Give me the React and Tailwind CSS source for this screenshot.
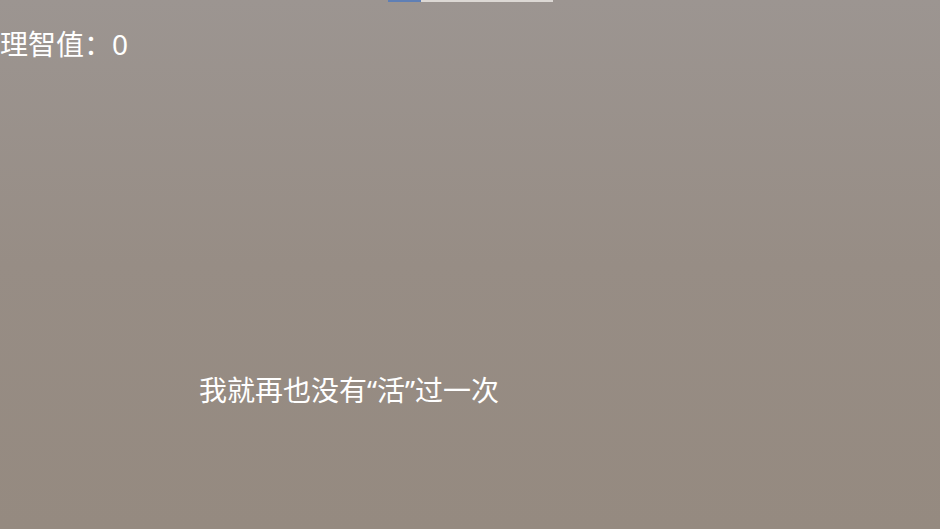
export default function App() {
  const progress = 20;
  return (
    <div
      className="relative h-[529px] w-[940px] overflow-hidden bg-gradient-to-b from-[#9c9591] via-[#978d85] to-[#958a80] text-white"
      style={{ fontFamily: '"Noto Sans", "Noto Sans CJK SC", sans-serif' }}
    >
      {/* loading bar */}
      <div className="absolute left-[388px] top-0 h-[2px] w-[165px] bg-[#dcd8d4]">
        <div className="h-full bg-[#5f7fb5]" style={{ width: `${progress}%` }} />
      </div>

      <div className="pt-[26px] text-[28px] leading-[36px]">理智值：0</div>

      <div className="pl-[199px] pt-[310px] text-[28px] leading-[36px]">
        我就再也没有“活”过一次
      </div>
    </div>
  );
}
